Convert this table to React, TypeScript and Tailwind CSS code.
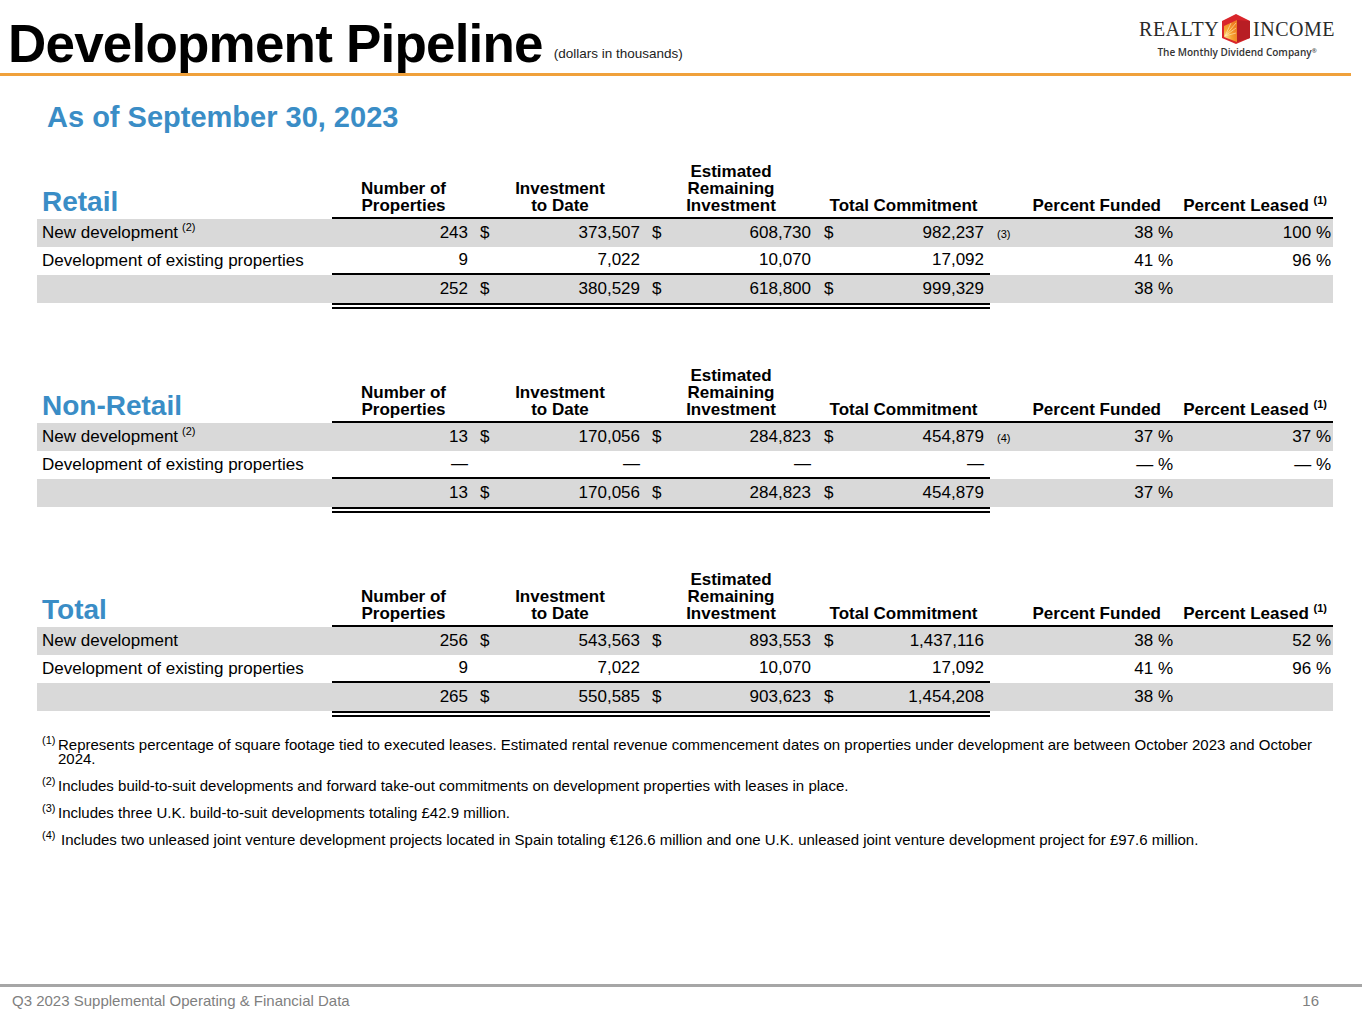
import React from 'react'

type Row = {
  label: string
  labelSup?: string
  num: string
  inv: string
  est: string
  total: string
  fn?: string
  funded: string
  leased?: string
  dollar?: boolean
}

type Section = {
  title: string
  rows: Row[]
  totals: Row
}

const sections: Section[] = [
  {
    title: 'Retail',
    rows: [
      { label: 'New development', labelSup: '(2)', num: '243', inv: '373,507', est: '608,730', total: '982,237', fn: '(3)', funded: '38 %', leased: '100 %', dollar: true },
      { label: 'Development of existing properties', num: '9', inv: '7,022', est: '10,070', total: '17,092', funded: '41 %', leased: '96 %' },
    ],
    totals: { label: '', num: '252', inv: '380,529', est: '618,800', total: '999,329', funded: '38 %', dollar: true },
  },
  {
    title: 'Non-Retail',
    rows: [
      { label: 'New development', labelSup: '(2)', num: '13', inv: '170,056', est: '284,823', total: '454,879', fn: '(4)', funded: '37 %', leased: '37 %', dollar: true },
      { label: 'Development of existing properties', num: '—', inv: '—', est: '—', total: '—', funded: '— %', leased: '— %' },
    ],
    totals: { label: '', num: '13', inv: '170,056', est: '284,823', total: '454,879', funded: '37 %', dollar: true },
  },
  {
    title: 'Total',
    rows: [
      { label: 'New development', num: '256', inv: '543,563', est: '893,553', total: '1,437,116', funded: '38 %', leased: '52 %', dollar: true },
      { label: 'Development of existing properties', num: '9', inv: '7,022', est: '10,070', total: '17,092', funded: '41 %', leased: '96 %' },
    ],
    totals: { label: '', num: '265', inv: '550,585', est: '903,623', total: '1,454,208', funded: '38 %', dollar: true },
  },
]

function Logo() {
  return (
    <div className="flex flex-col items-center pt-[14px] pr-[30px]">
      <div className="flex items-center gap-[3px] font-['Liberation_Serif',serif] text-[20px] leading-none text-[#2a2a2a]">
        <span className="tracking-[0.5px]">REALTY</span>
        <svg width="28" height="30" viewBox="0 0 28 30">
          <defs>
            <radialGradient id="sun" cx="0.1" cy="0.95" r="1">
              <stop offset="0" stopColor="#fde7a0" />
              <stop offset="0.5" stopColor="#f7a531" />
              <stop offset="1" stopColor="#ef7d22" />
            </radialGradient>
          </defs>
          <polygon points="14,0 28,7 28,24 14,30 0,24 0,7" fill="#d9252b" />
          <polygon points="2,12 15,6 15,28 2,23" fill="url(#sun)" />
          <g stroke="#fff3c4" strokeWidth="0.7" opacity="0.8">
            <line x1="3" y1="22" x2="14" y2="9" />
            <line x1="3" y1="22" x2="14" y2="14" />
            <line x1="3" y1="22" x2="14" y2="19" />
            <line x1="3" y1="22" x2="9" y2="9" />
          </g>
          <polygon points="15,6 28,7 28,24 15,28" fill="#b81e24" />
        </svg>
        <span className="tracking-[0.5px]">INCOME</span>
      </div>
      <div className="mt-[3px] text-[10px] leading-none font-semibold text-[#333] font-['Open_Sans',sans-serif]">
        The Monthly Dividend Company<sup className="text-[6px]">®</sup>
      </div>
    </div>
  )
}

function SectionTable({ section }: { section: Section }) {
  const hdr = 'align-bottom font-bold text-[17px] leading-[17px] pb-[3px] border-b-2 border-black text-black'
  const rowCell = 'h-[28px] align-middle'
  return (
    <table className="table-fixed border-separate border-spacing-0 w-[1296px] ml-[37px] text-[17px] text-black">
      <colgroup>
        <col className="w-[295px]" />
        <col className="w-[143px]" />
        <col className="w-[20px]" />
        <col className="w-[150px]" />
        <col className="w-[20px]" />
        <col className="w-[152px]" />
        <col className="w-[20px]" />
        <col className="w-[153px]" />
        <col className="w-[35px]" />
        <col className="w-[155px]" />
        <col className="w-[153px]" />
      </colgroup>
      <thead>
        <tr>
          <th className="align-bottom text-left pl-[5px] pb-[3px] text-[28px] leading-none font-bold text-[#3a8dc6]">{section.title}</th>
          <th className={`${hdr} text-center`}>Number of<br />Properties</th>
          <th colSpan={2} className={`${hdr} text-center`}>Investment<br />to Date</th>
          <th colSpan={2} className={`${hdr} text-center`}>Estimated<br />Remaining<br />Investment</th>
          <th colSpan={2} className={`${hdr} text-center`}>Total Commitment</th>
          <th colSpan={2} className={`${hdr} text-right pr-[19px]`}>Percent Funded</th>
          <th className={`${hdr} text-right pr-[6px]`}>
            Percent Leased <sup className="text-[11px] font-bold relative -top-[7px] align-baseline">(1)</sup>
          </th>
        </tr>
      </thead>
      <tbody>
        {section.rows.map((r, i) => {
          const bg = i === 0 ? 'bg-[#d9d9d9]' : 'bg-white'
          const line = i === 1 ? 'border-b-2 border-black' : ''
          return (
            <tr key={i} className={bg}>
              <td className={`${rowCell} pl-[5px] whitespace-nowrap`}>
                {r.label}
                {r.labelSup && <sup className="text-[11px] ml-[4px] relative -top-[7px] align-baseline">{r.labelSup}</sup>}
              </td>
              <td className={`${rowCell} ${line} text-right pr-[7px]`}>{r.num}</td>
              <td className={`${rowCell} ${line} pl-[5px]`}>{r.dollar ? '$' : ''}</td>
              <td className={`${rowCell} ${line} text-right pr-[5px]`}>{r.inv}</td>
              <td className={`${rowCell} ${line} pl-[7px]`}>{r.dollar ? '$' : ''}</td>
              <td className={`${rowCell} ${line} text-right pr-[6px]`}>{r.est}</td>
              <td className={`${rowCell} ${line} pl-[7px]`}>{r.dollar ? '$' : ''}</td>
              <td className={`${rowCell} ${line} text-right pr-[6px]`}>{r.total}</td>
              <td className={`${rowCell} pl-[7px] align-top pt-[1px]`}>
                {r.fn && <span className="text-[11px] leading-none">{r.fn}</span>}
              </td>
              <td className={`${rowCell} text-right pr-[7px]`}>{r.funded}</td>
              <td className={`${rowCell} text-right pr-[2px]`}>{r.leased}</td>
            </tr>
          )
        })}
        <tr className="bg-[#d9d9d9]">
          <td className={rowCell}></td>
          <td className={`${rowCell} text-right pr-[7px]`}>{section.totals.num}</td>
          <td className={`${rowCell} pl-[5px]`}>$</td>
          <td className={`${rowCell} text-right pr-[5px]`}>{section.totals.inv}</td>
          <td className={`${rowCell} pl-[7px]`}>$</td>
          <td className={`${rowCell} text-right pr-[6px]`}>{section.totals.est}</td>
          <td className={`${rowCell} pl-[7px]`}>$</td>
          <td className={`${rowCell} text-right pr-[6px]`}>{section.totals.total}</td>
          <td className={rowCell}></td>
          <td className={`${rowCell} text-right pr-[7px]`}>{section.totals.funded}</td>
          <td className={rowCell}></td>
        </tr>
        <tr>
          <td></td>
          <td colSpan={7} className="p-0">
            <div className="h-[6px] border-y-2 border-black"></div>
          </td>
          <td colSpan={3}></td>
        </tr>
      </tbody>
    </table>
  )
}

function Note({ n, children, gap }: { n: string; children: React.ReactNode; gap?: boolean }) {
  return (
    <div className="flex text-[15px] leading-[14px] text-black">
      <span className="w-[16px] shrink-0 text-[11px] leading-none -mt-[3px]">{n}</span>
      <div className={gap ? 'pl-[3px]' : ''}>{children}</div>
    </div>
  )
}

export default function App() {
  return (
    <div className="w-[1365px] h-[1024px] bg-white font-['Liberation_Sans',Arial,sans-serif] flex flex-col overflow-hidden">
      {/* header */}
      <div className="flex justify-between h-[73px]">
        <div className="flex items-end pl-[8px] pb-[3px]">
          <h1 className="text-[53px] leading-none font-bold tracking-[-0.8px] text-black">Development Pipeline</h1>
          <span className="ml-[11px] mb-[6px] text-[13.5px] text-[#222]">(dollars in thousands)</span>
        </div>
        <Logo />
      </div>
      <div className="h-[3px] w-[1351px] bg-[#f0a13b]"></div>

      <div className="pl-[47px] pt-[27px] text-[29px] leading-none font-bold text-[#3a8dc6]">As of September 30, 2023</div>

      <div className="mt-[31px] flex flex-col gap-[58px]">
        {sections.map((s) => (
          <SectionTable key={s.title} section={s} />
        ))}
      </div>

      <div className="mt-[21px] ml-[42px] mr-[30px] flex flex-col gap-[13px]">
        <Note n="(1)">
          Represents percentage of square footage tied to executed leases. Estimated rental revenue commencement dates on properties under development are between October 2023 and October 2024.
        </Note>
        <Note n="(2)">Includes build-to-suit developments and forward take-out commitments on development properties with leases in place.</Note>
        <Note n="(3)">Includes three U.K. build-to-suit developments totaling £42.9 million.</Note>
        <Note n="(4)" gap>
          Includes two unleased joint venture development projects located in Spain totaling €126.6 million and one U.K. unleased joint venture development project for £97.6 million.
        </Note>
      </div>

      <div className="mt-auto">
        <div className="h-[3px] w-[1362px] bg-[#a6a6a6]"></div>
        <div className="flex justify-between pl-[12px] pr-[46px] pt-[6px] pb-[16px] text-[15px] leading-none text-[#7f7f7f]">
          <span>Q3 2023 Supplemental Operating &amp; Financial Data</span>
          <span>16</span>
        </div>
      </div>
    </div>
  )
}
